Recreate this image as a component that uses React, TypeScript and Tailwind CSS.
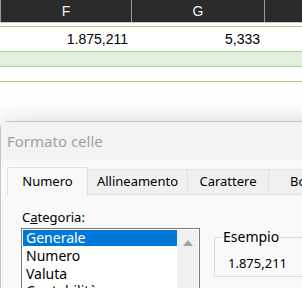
export default function App() {
  const ui = { fontFamily: '"Noto Sans", "Open Sans", sans-serif' };
  const cell = { fontFamily: '"Liberation Sans", Arial, sans-serif' };

  return (
    <div className="w-[302px] h-[288px] overflow-hidden bg-white relative">
      {/* spreadsheet */}
      <div style={cell}>
        <div className="flex h-[22px] bg-[#2b2b2b] text-[#f0f0f0] text-[14px]">
          <div className="w-[131px] flex items-center justify-center border-l border-[#9a9a9a]">F</div>
          <div className="w-[133px] flex items-center justify-center border-l border-[#9a9a9a]">G</div>
          <div className="flex-1 border-l border-[#9a9a9a]" />
        </div>
        <div className="h-px bg-[#c8c8c8]" />
        <div className="h-[3px]" />
        <div className="flex h-[26px] border-y border-[#a9d08e] text-[14px] text-black">
          <div className="w-[131px] flex items-center justify-end pr-[3px]">1.875,211</div>
          <div className="w-[133px] flex items-center justify-end pr-[4px]">5,333</div>
        </div>
        <div className="h-[14px] bg-[#e2efda]" />
        <div className="h-[16px] border-y border-[#a9d08e]" />
      </div>

      {/* dialog */}
      <div
        className="absolute left-0 top-[121px] w-[340px] h-[180px] rounded-tl-[7px] border border-[#c4c4c4] bg-[#f9f9f9] shadow-[0_0_24px_rgba(0,0,0,0.16)]"
        style={ui}
      >
        <div className="h-[38px] bg-[#f3f3f3] flex items-center pl-[6px] text-[15px] text-[#a0a0a0]">
          Formato celle
        </div>
        <div className="pl-[6px] pt-[8px]">
          <div className="flex items-end h-[27px] border-b border-[#e0e0e0] text-[13px] text-black">
            <div className="shrink-0 w-[81px] h-[28px] -mb-px bg-[#f9f9f9] border border-b-0 border-[#e0e0e0] rounded-t-[2px] flex items-center justify-center">
              Numero
            </div>
            <div className="shrink-0 w-[100px] h-[25px] bg-[#f0f0f0] border-r border-t border-[#e0e0e0] flex items-center justify-center">
              Allineamento
            </div>
            <div className="shrink-0 w-[81px] h-[25px] bg-[#f0f0f0] border-r border-t border-[#e0e0e0] flex items-center justify-center">
              Carattere
            </div>
            <div className="shrink-0 w-[60px] h-[25px] bg-[#f0f0f0] border-t border-r border-[#e0e0e0] flex items-center pl-[21px]">
              Bordo
            </div>
          </div>
        </div>
        <div className="flex pl-[20px] pt-[14px] text-[13px] text-black">
          <div className="w-[179px] shrink-0">
            <div className="h-[17px] leading-[17px] pl-px">
              C<span className="underline">a</span>tegoria:
            </div>
            <div className="mt-[2px] flex h-[70px] border border-[#7a7a7a] bg-white p-px text-[14px]">
              <div className="flex-1 leading-[17.5px]">
                <div className="bg-[#0078d7] text-white pl-[3px] h-[16px] leading-[16px] mb-[1px]">Generale</div>
                <div className="pl-[3px]">Numero</div>
                <div className="pl-[3px]">Valuta</div>
                <div className="pl-[3px]">Contabilità</div>
              </div>
              <div className="w-[21px] bg-[#f0f0f0] flex justify-center pt-[10px]">
                <svg width="10" height="6" viewBox="0 0 10 6">
                  <path d="M5 0 L10 6 L0 6 Z" fill="#a3a3a3" />
                </svg>
              </div>
            </div>
          </div>
          <div className="ml-[14px] w-[120px] shrink-0 pt-[28px]">
            <div className="relative h-[40px] border border-[#dcdcdc]">
              <div className="absolute -top-[10px] left-[7px] px-px bg-[#f9f9f9] leading-[17px] text-[14px]">Esempio</div>
              <div className="pt-[17px] pl-[13px] leading-[17px]">1.875,211</div>
            </div>
          </div>
        </div>
      </div>
    </div>
  );
}
